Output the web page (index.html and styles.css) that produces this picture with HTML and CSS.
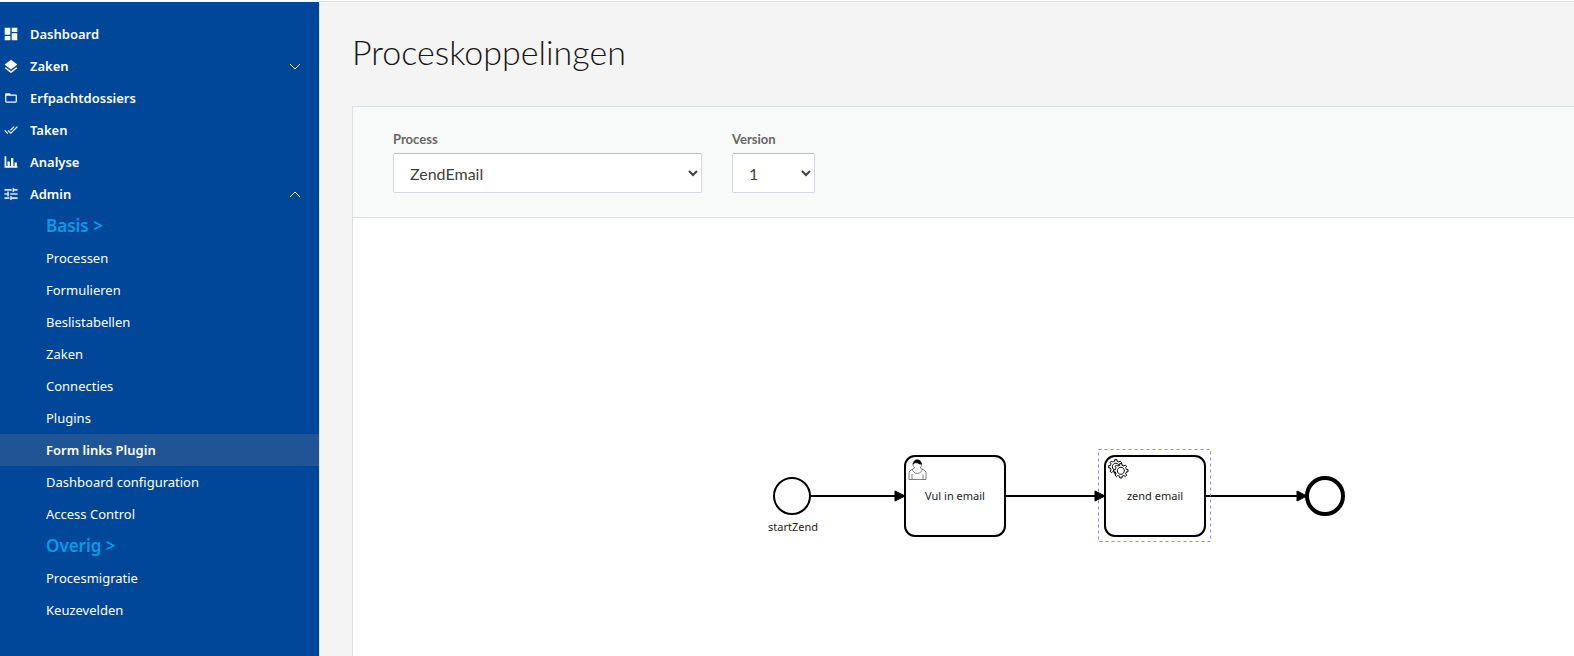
FILE: index.html
```html
<!DOCTYPE html>
<html lang="nl">
<head>
<meta charset="utf-8">
<title>Proceskoppelingen</title>
<link rel="stylesheet" href="styles.css">
</head>
<body>
<div class="app">
  <nav class="sidebar" aria-label="Hoofdmenu">
    <ul class="menu">
      <li><a class="item" href="#"><svg class="icon" viewBox="2 2 20 20"><path d="M3 13h8V3H3v10zm0 8h8v-6H3v6zm10 0h8V11h-8v10zm0-18v6h8V3h-8z"/></svg>Dashboard</a></li>
      <li><button class="item" type="button"><svg class="icon" viewBox="2 1 20 20"><path d="M11.99 18.54l-7.37-5.73L3 14.07l9 7 9-7-1.63-1.27-7.38 5.74zM12 16l7.36-5.73L21 9l-9-7-9 7 1.63 1.27L12 16z"/></svg>Zaken<svg class="chevron" viewBox="0 0 12 12"><path d="M1 4l5 5 5-5"/></svg></button></li>
      <li><a class="item" href="#"><svg class="icon" viewBox="0 0 24 24"><path d="M20 6h-8l-2-2H4c-1.1 0-1.99.9-1.99 2L2 18c0 1.1.9 2 2 2h16c1.1 0 2-.9 2-2V8c0-1.1-.9-2-2-2zm0 12H4V8h16v10z"/></svg>Erfpachtdossiers</a></li>
      <li><a class="item" href="#"><svg class="icon" viewBox="0 0 24 24"><path d="M18 7l-1.41-1.41-6.34 6.34 1.41 1.41L18 7zm4.24-1.41L11.66 16.17 7.48 12l-1.41 1.41L11.66 19l12-12-1.42-1.41zM.41 13.41L6 19l1.41-1.41L1.83 12 .41 13.41z"/></svg>Taken</a></li>
      <li><a class="item" href="#"><svg class="icon" viewBox="0 0 24 24"><path d="M1 2h3v17h19v3H1zM6 11h4v8H6zM12 5h4v14h-4zM18 13h4v6h-4z"/></svg>Analyse</a></li>
      <li>
        <button class="item" type="button" aria-expanded="true"><svg class="icon heavy" viewBox="0 0 24 24"><path d="M1 18v2h8v-2H1zM1 4v2h12V4H1zm12 18v-2h10v-2H13v-2h-2v6h2zM6 8v3H1v2h5v3h2V8H6zm17 5v-2H11v2h12zM15 8h2V6h6V4h-6V2h-2v6z"/></svg>Admin<svg class="chevron" viewBox="0 0 12 12"><path d="M1 9l5-5 5 5"/></svg></button>
        <ul class="submenu">
          <li class="group">Basis &gt;</li>
          <li><a class="sub" href="#">Processen</a></li>
          <li><a class="sub" href="#">Formulieren</a></li>
          <li><a class="sub" href="#">Beslistabellen</a></li>
          <li><a class="sub" href="#">Zaken</a></li>
          <li><a class="sub" href="#">Connecties</a></li>
          <li><a class="sub" href="#">Plugins</a></li>
          <li><a class="sub active" href="#" aria-current="page">Form links Plugin</a></li>
          <li><a class="sub" href="#">Dashboard configuration</a></li>
          <li><a class="sub" href="#">Access Control</a></li>
          <li class="group">Overig &gt;</li>
          <li><a class="sub" href="#">Procesmigratie</a></li>
          <li><a class="sub" href="#">Keuzevelden</a></li>
        </ul>
      </li>
    </ul>
  </nav>
  <main class="main">
    <h1 class="title">Proceskoppelingen</h1>
    <section class="card">
      <form class="filters">
        <div class="field">
          <label for="process">Process</label>
          <select id="process" class="process"><option>ZendEmail</option></select>
        </div>
        <div class="field">
          <label for="version">Version</label>
          <select id="version" class="version"><option>1</option></select>
        </div>
      </form>
      <svg class="canvas" role="img" aria-label="Procesdiagram">
        <defs>
          <marker id="arrow" viewBox="0 0 20 20" refX="11" refY="10" markerWidth="10" markerHeight="10" orient="auto"><path d="M1 5L11 10 1 15z" stroke="#000" stroke-linejoin="round"/></marker>
          <path id="gear" d="m 12,18 v -1.71335 c 0.352326,-0.0705 0.703932,-0.17838 1.047628,-0.32133 0.344416,-0.14465 0.665822,-0.32133 0.966377,-0.52145 l 1.19431,1.18005 1.567487,-1.57688 -1.195028,-1.18014 c 0.403376,-0.61394 0.683079,-1.29908 0.825447,-2.01824 l 1.622133,-0.01 v -2.2196 l -1.636514,0.01 c -0.07333,-0.35153 -0.178319,-0.70024 -0.323564,-1.04372 -0.145244,-0.34406 -0.321407,-0.6644 -0.522735,-0.96217 l 1.131035,-1.13631 -1.583305,-1.56293 -1.129598,1.13589 c -0.614052,-0.40108 -1.302883,-0.68093 -2.022633,-0.82247 l 0.0093,-1.61852 h -2.241173 l 0.0042,1.63124 c -0.353763,0.0736 -0.705369,0.17977 -1.049785,0.32371 -0.344415,0.14437 -0.665102,0.32092 -0.9635,0.52006 l -1.169863,-1.15823 -1.566769,1.5792 1.168426,1.15669 c -0.402657,0.61283 -0.68308,1.29797 -0.824729,2.01713 l -1.658804,0.003 v 2.22174 l 1.672465,-0.006 c 0.073327,0.35077 0.17976,0.70243 0.324285,1.04472 0.145243,0.34448 0.321406,0.6644 0.522734,0.96066 l -1.199343,1.19723 1.584026,1.56011 1.196466,-1.19348 c 0.614052,0.40346 1.302883,0.68232 2.023352,0.82331 l 0.0007,1.69892 z m 0.221462,-3.9957 c -1.788948,0.7502 -3.8576,-0.0928 -4.609706,-1.87438 -0.752106,-1.78321 0.090598,-3.84627 1.880265,-4.59604 1.78823,-0.74936 3.856881,0.0929 4.608987,1.87437 0.752106,1.78165 -0.0906,3.84612 -1.879546,4.59605 z"/>
        </defs>
        <g class="flow">
          <path d="M457 278H552"/>
          <path d="M652 278H752"/>
          <path d="M852 278H954"/>
        </g>
        <circle class="node" cx="439" cy="278" r="18"/>
        <text class="caption" x="440" y="313">startZend</text>
        <rect class="node" x="552" y="238" width="100" height="80" rx="10"/>
        <g class="glyph" transform="translate(552 238)">
          <path d="m 15,12 c 0.909,-0.845 1.594,-2.049 1.594,-3.385 0,-2.554 -1.805,-4.622 -4.357,-4.622 -2.552,0 -4.288,2.068 -4.288,4.622 0,1.348 0.974,2.562 1.896,3.405 -0.529,0.187 -5.669,2.097 -5.794,4.756 v 6.718 h 17 v -6.718 c 0,-2.298 -5.528,-4.595 -6.051,-4.776 z m -8,6 l 0,5.5 m 11,0 l 0,-5"/>
          <path d="m 17.162,13.009 c 0,2.447 -2.158,4.431 -4.821,4.431 -2.665,0 -4.822,-1.981 -4.822,-4.431"/>
          <path class="hair" d="m 8.1,8.2 c 0,0 2.251,-2.358 4.274,-1.177 2.024,1.181 4.221,1.537 4.124,0.965 -0.098,-0.57 -0.117,-3.791 -4.191,-4.136 -3.572,-0.304 -4.207,4.348 -4.207,4.348 z"/>
        </g>
        <text class="caption" x="602" y="282">Vul in email</text>
        <rect class="node" x="752" y="238" width="100" height="80" rx="10"/>
        <g class="gears" transform="translate(752 238)">
          <use href="#gear"/>
          <circle cx="16" cy="15" r="5" stroke="none"/>
          <use href="#gear" transform="translate(5 4)"/>
        </g>
        <text class="caption" x="802" y="282">zend email</text>
        <rect class="selection" x="745.5" y="231.5" width="112" height="92"/>
        <g class="flow">
          <path d="M542 278H552" marker-end="url(#arrow)"/>
          <path d="M742 278H752" marker-end="url(#arrow)"/>
          <path d="M944 278H954" marker-end="url(#arrow)"/>
        </g>
        <circle class="node end" cx="972" cy="278" r="18"/>
      </svg>
    </section>
  </main>
</div>
</body>
</html>
```
FILE: styles.css
```css
* { box-sizing: border-box; }

body {
  margin: 0;
  font-family: Lato, "Open Sans", sans-serif;
  color: #161616;
  background: #fff;
}

.app {
  display: flex;
  min-height: 100vh;
  padding-top: 1px;
}

.sidebar {
  flex: 0 0 319px;
  margin-top: 1px;
  padding-top: 16px;
  background: #004699;
  font-family: "Noto Sans", sans-serif;
}

.menu,
.submenu {
  margin: 0;
  padding: 0;
  list-style: none;
}

.item,
.sub,
.group {
  display: flex;
  align-items: center;
  width: 100%;
  height: 32px;
  color: #fff;
  font-size: 13px;
  text-decoration: none;
}

.item {
  gap: 12px;
  padding: 0 18px 0 4px;
  border: 0;
  background: none;
  font-family: inherit;
  font-weight: 600;
}

.icon {
  width: 14px;
  height: 14px;
  fill: #fff;
}

.heavy {
  stroke: #fff;
  stroke-width: 0.5;
}

.chevron {
  width: 12px;
  height: 12px;
  margin-left: auto;
  fill: none;
  stroke: #fff;
}

.sub,
.group { padding-left: 46px; }

.group {
  padding-bottom: 2px;
  color: #009de6;
  font-size: 17px;
  font-weight: 600;
}

.active {
  background: #1f5594;
  font-weight: 600;
}

.main {
  display: flex;
  flex: 1;
  flex-direction: column;
  min-width: 0;
  padding: 30px 0 0 32px;
  border-top: 1px solid #dfe1e6;
  border-left: 1px solid #dfe1e6;
  background: #f4f4f4;
}

.title {
  margin: 0 0 34px;
  font-size: 34px;
  font-weight: 300;
  line-height: 40px;
}

.card {
  display: flex;
  flex: 1;
  flex-direction: column;
  border: 1px solid #dcdfe3;
  border-width: 1px 0 0 1px;
  background: #fff;
}

.filters {
  display: flex;
  gap: 30px;
  padding: 22px 40px 24px;
  border-bottom: 1px solid #dcdfe3;
  background: #f8faf9;
}

.field {
  display: flex;
  flex-direction: column;
  gap: 4px;
}

.field label {
  color: #666;
  font-size: 13px;
  font-weight: 700;
  line-height: 20px;
}

.field select {
  height: 40px;
  padding: 0 0 0 12px;
  border: 1px solid #d4d7e0;
  border-top-color: #b9bdc5;
  border-radius: 2px;
  background: #fff;
  color: #404040;
  font-family: inherit;
  font-size: 16px;
}

.process { width: 309px; }
.version { width: 83px; }

.canvas {
  flex: 1;
  width: 100%;
  min-height: 340px;
}

.node {
  fill: #fff;
  stroke: #000;
  stroke-width: 2;
}

.end { stroke-width: 4; }

.flow {
  fill: none;
  stroke: #000;
  stroke-width: 2;
}

#arrow path { fill: #000; }

.glyph {
  fill: #fff;
  stroke: #000;
  stroke-width: 0.5;
}

.hair { fill: #000; }

.gears {
  fill: #fff;
  stroke: #000;
}

.selection {
  fill: none;
  stroke: #8888ff;
  stroke-dasharray: 3 3;
}

.caption {
  fill: #222;
  font-family: "Noto Sans", sans-serif;
  font-size: 11px;
  text-anchor: middle;
}
```
